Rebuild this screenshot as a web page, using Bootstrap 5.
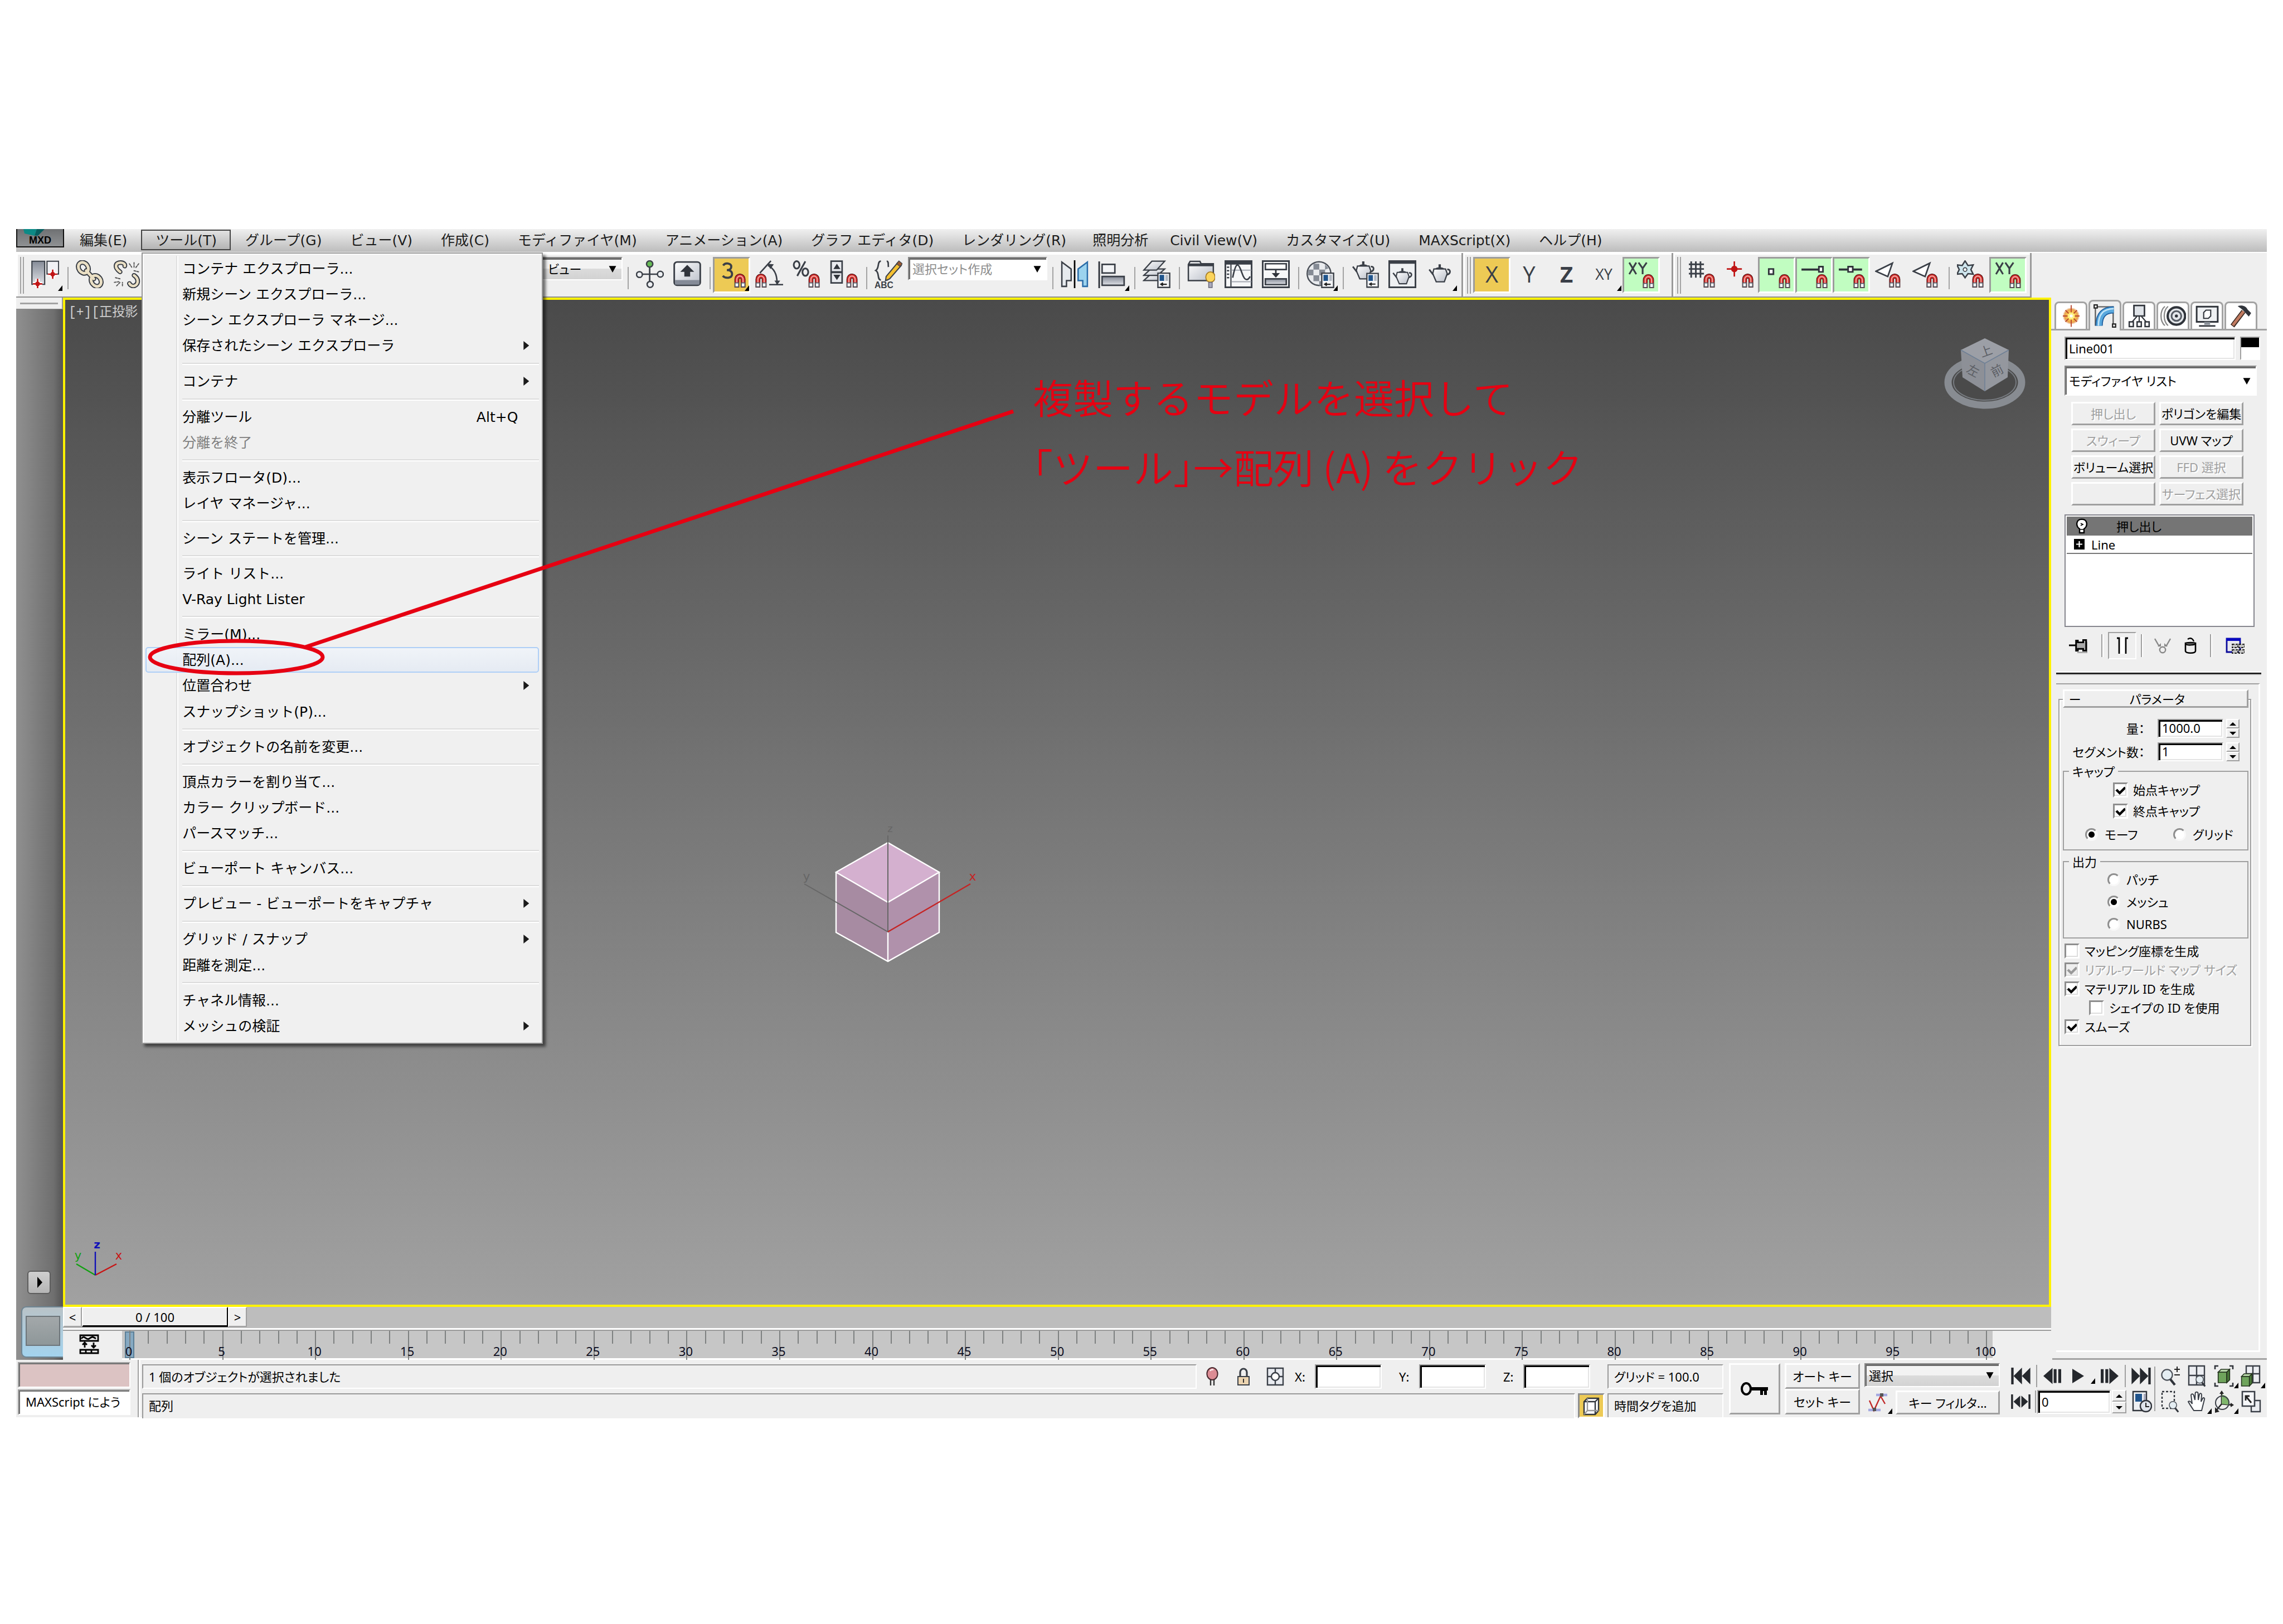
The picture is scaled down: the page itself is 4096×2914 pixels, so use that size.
<!DOCTYPE html>
<html lang="ja">
<head>
<meta charset="utf-8">
<meta name="viewport" content="width=device-width, initial-scale=1">
<title>MXD - ツール / 配列</title>
<link href="https://cdn.jsdelivr.net/npm/bootstrap@5.3.0/dist/css/bootstrap.min.css" rel="stylesheet">
<style>
:root{--face:#efefef;--gold:#edca55;--mint:#c1fdc1;--ink:#3a3f47}
body{background:#fff;color:#000;font-family:"Noto Sans","Noto Sans CJK JP",sans-serif;font-size:22px;line-height:26px;font-feature-settings:"palt"}
button,input,select{font:inherit;color:inherit;border-radius:0}
svg{display:block;flex:none}
.shell{padding:411px 29px 371px}

/* menu bar */
.menubar{height:43px;background:linear-gradient(#f0f0f0,#bcbcbc);border-bottom:2px solid #fff;font:25px/30px "DejaVu Sans","Noto Sans CJK JP",sans-serif;font-feature-settings:normal}
.logo{width:86px;height:33px;padding:0;margin-right:2px;border:2px solid #111;border-top:0;background:linear-gradient(#6f7173,#8f9193);position:relative;font:700 18px/18px "Liberation Sans",sans-serif}
.logo svg{position:absolute;left:11px;top:0}
.logo span{position:absolute;left:0;right:0;top:11px}
.menubar .nav-link{padding:4px 23px 4px 24px;margin-top:1px;height:37px;line-height:28px;color:#1b1b1b;border:2px solid transparent;white-space:nowrap}
.menubar .nav-link.tight{padding-left:20px;padding-right:11px}
.menubar .nav-link.opened{border-color:#444;background:linear-gradient(#e2e2e2,#b4b4b4)}
.toolmenu.dropdown-menu{top:42px;left:1px;width:720px;margin:0;padding:4px 5px 6px;border:2px solid #979797;border-radius:0;background:#f0f0f0;box-shadow:inset 2px 2px #fbfbfb,5px 5px 5px rgba(0,0,0,.55);font-size:25px}
.toolmenu::before{content:"";position:absolute;left:60px;top:4px;bottom:4px;width:4px;background:linear-gradient(90deg,#e0e0e0 50%,#fff 50%)}
.toolmenu .dropdown-item{position:relative;height:46px;padding:0 36px 0 64px;line-height:43px;color:#000;border:2px solid transparent;border-radius:5px;display:flex;justify-content:space-between}
.toolmenu .dropdown-item.off{color:#808080}
.toolmenu .dropdown-item.hot{border-color:#aecff7;background:linear-gradient(rgba(240,244,249,.9),rgba(228,234,243,.9))}
.toolmenu .dropdown-item.sub{height:47px}
.toolmenu .dropdown-item.sub::after{content:"";margin:13px -20px 0 0;width:10px;height:16px;background:#1a1a1a;clip-path:polygon(0 0,100% 50%,0 100%)}
.toolmenu .dropdown-divider{height:4px;margin:7px 0 6px 66px;border:0;border-top:2px solid #dcdcdc;background:#fff;opacity:1}

/* main toolbar */
.toolbars{background:var(--face)}
.tgroup{height:80px;padding:7px 6px 0 7px;border-bottom:2px solid #8f8f8f;border-right:3px solid #9a9a9a;box-shadow:inset 3px 3px #fff}
.tgroup.axes{padding-right:21px}
.grip{width:7px;height:66px;margin-right:4px;border:solid #a3a3a3;border-width:0 2px}
.tbtn{width:67px;height:65px;padding:0 0 4px;border:3px solid transparent;background:none;display:flex;align-items:center;justify-content:center;position:relative;flex:none;color:var(--ink)}
.tbtn svg{width:50px;height:50px}
.tbtn.gold{background:var(--gold)}
.tbtn.mint{background:var(--mint)}
.tbtn.gold,.tbtn.mint{border-color:#9c9c9c #fff #fff #9c9c9c}
.fly::after{content:"";position:absolute;right:-1px;bottom:1px;width:8px;height:10px;background:#000;clip-path:polygon(100% 0,100% 100%,0 100%)}
.tsep{width:2px;height:40px;margin:18px 4px 0 7px;background:#a3a3a3;flex:none}
.axis{font:500 40px/44px "Open Sans",sans-serif}
.axis.small{font-size:27px}
.under-menu{width:698px;flex:none}
.combo{appearance:none;border:2px solid;border-color:#8b8b8b #fff #fff #8b8b8b;box-shadow:inset 2px 3px #6a6a6a;outline:0;padding:0 0 0 6px;background:#fff url("data:image/svg+xml,%3Csvg xmlns='http://www.w3.org/2000/svg' viewBox='0 0 10 10'%3E%3Cpath d='M0 1h10L5 10z'/%3E%3C/svg%3E") no-repeat right 7px center/18px 13px}
.combo.glossy{background:url("data:image/svg+xml,%3Csvg xmlns='http://www.w3.org/2000/svg' viewBox='0 0 10 10'%3E%3Cpath d='M0 1h10L5 10z'/%3E%3C/svg%3E") no-repeat right 7px center/18px 13px,linear-gradient(#f3f3f3 50%,#dcdcdc 50%,#d2d2d2)}
.tbtn+.combo,.under-menu+.combo{height:42px;margin:0 2px}
.combo.coordsys{width:156px;padding-left:20px}
.nameset{width:250px;color:#8d8d8d}

/* left strip */
.sidestrip{width:84px;background:linear-gradient(90deg,#909090,#6f6f6f 80%,#555)}
.striptop{height:21px;background:var(--face);border-bottom:1px solid #888;border-right:2px solid #999;padding:9px 7px 0 7px}
.striptop div{height:3px;background:#a3a3a3}
.playtab{width:42px;height:42px;margin-left:20px;padding:0;border:2px solid #5d5d5d;border-radius:6px;background:linear-gradient(#cfcfcf,#b5b5b5)}
.bluetab{width:75px;height:92px;margin:22px 0 4px 9px;padding:15px 5px 19px 6px;border:2px solid #6e8694;border-right:0;border-radius:9px 0 0 9px;background:linear-gradient(#b9c3c8,#a3d3ee)}
.bluetab div{height:100%;border:2px solid #6d757a;background:linear-gradient(#a3a8aa,#8e9799)}

/* viewport */
.viewport3d{border:4px solid #fff200;background:linear-gradient(#4a4a4a,#767676 50%,#a1a1a1);overflow:hidden}
.vlabel{position:absolute;left:6px;top:9px;font:23px/28px "Liberation Mono","Noto Sans CJK JP",monospace;color:#cfcfcf}
.scene{position:absolute;left:0;top:0;width:100%;height:100%}
.callout{position:absolute;left:1736px;top:110px;color:#e60012;font:350 72px/125px "Noto Sans CJK JP",sans-serif;font-feature-settings:"halt";white-space:nowrap}

/* time slider and track bar */
.timeslider{height:41px;background:#bdbdbd;border-bottom:3px solid #fff}
.timeslider button{height:36px;padding:0;background:var(--face);border:2px solid;border-color:#fff #a0a0a0 #a0a0a0 #fff;line-height:30px}
.timeslider .step{width:34px}
.timeslider .thumb{width:262px;border-color:#fff #000 #000 #fff;border-bottom-width:3px}
.trackrow{height:54px;border-top:2px solid #9a9a9a;background:var(--face)}
.curvebtn{width:106px;padding:0 12px 4px 0;border:0;background:var(--face)}
.track{background:#c6c6c6;border-bottom:3px solid #fff;padding:0 10px 0 13px;margin-right:105px;position:relative}
.tick{flex:1 1 0;display:flex;height:23px;border-left:2px solid #7d8080;position:relative}
.tick.major{height:52px}
.tick.last{flex:0 0 2px}
.tick span{width:0;display:flex;justify-content:center;margin-left:-3px;padding-top:23px;color:#0d0d20;line-height:26px}
.nowmark{position:absolute;left:5px;top:1px;bottom:0;width:17px;background:rgba(70,140,190,.5);border:2px solid #5c7f97}

/* command panel */
.cmdpanel{width:387px;background:var(--face)}
.ptabs{height:59px;padding-left:6px;gap:2px;border-bottom:3px solid #a3a3a3}
.ptab{width:59px;height:49px;padding:0;background:#fff;border:3px solid #a3a3a3;border-bottom:0;border-radius:8px 8px 0 0;display:flex;align-items:center;justify-content:center}
.ptab.on{height:55px;margin-bottom:-3px;background:var(--face)}
.pbody{padding:11px 10px 0 24px}
.sunk{border:2px solid;border-color:#a0a0a0 #fff #fff #a0a0a0;box-shadow:inset 3px 3px #000,inset -2px -2px #e4e4e4;background:#fff;outline:0;padding:0 0 0 6px;min-width:0}
.soft{border:2px solid;border-color:#999 #fff #fff #999;background:var(--face)}
.raised{background:var(--face);border:3px solid;border-color:#fff #a0a0a0 #a0a0a0 #fff;padding:0;white-space:nowrap}
.raised:disabled{color:#a0a0a0;text-shadow:2px 2px #fff}
.objname{width:307px;height:42px}
.swatch{width:36px;height:42px;padding:0;border:2px solid;border-color:#a0a0a0 #fff #fff #a0a0a0;background:linear-gradient(#000 17px,#fff 17px)}
.modcombo{width:345px;height:54px;margin-top:10px}
.modgrid{display:grid;grid-template-columns:151px 151px;grid-auto-rows:42px;gap:6px 7px;margin:11px 0 0 12px}
.modgrid .raised{line-height:34px}
.modstack{width:341px;height:202px;margin-top:16px;border:2px solid #85858d;background:#fff;padding:2px}
.modstack .sel{height:34px;background:#757575;padding-left:17px}
.modstack .base{height:33px;border-bottom:2px solid #777;padding-left:13px;gap:12px}
.stackbar{height:49px;margin-top:9px}
.stackbar button{border:0;background:none;padding:0;height:49px}
.stackbar .down{width:51px;border:2px solid;border-color:#a0a0a0 #fff #fff #a0a0a0;display:flex;justify-content:center;align-items:center}
.ssep{width:4px;height:41px;background:linear-gradient(90deg,#a0a0a0 50%,#fff 50%)}
.heavy{height:6px;margin:22px 0 0 -15px;border-top:2px solid #fff;border-bottom:2px solid #999;background:#000}
.rollouts{margin:15px 2px 11px -15px;border-top:2px solid #a0a0a0;border-right:3px solid #fff;border-bottom:3px solid #fff}
.rframe{margin:26px 13px 0 4px;border:2px solid #a0a0a0;padding-bottom:16px;box-shadow:2px 2px #fff,inset 2px 2px #fff}
.rhead{display:flex;height:33px;margin:-19px 4px 0 6px;width:333px;align-items:center;line-height:24px}
.prow{height:34px;padding-right:19px;gap:5px;display:flex;justify-content:flex-end;align-items:center}
.prow label{margin-right:18px}
.prow .sunk{width:118px;height:34px;padding-bottom:2px}
.spin{width:24px;display:flex;flex-direction:column;flex:none}
.spin button{flex:1;padding:0;border:2px solid;border-color:#fff #a0a0a0 #a0a0a0 #fff;background:var(--face);display:flex;align-items:center;justify-content:center;min-height:0}
.pset{margin:6px 3px 0 6px;border:2px solid #a0a0a0;padding:0 0 4px}
.pset legend{float:none;width:auto;margin:0 0 0 9px;padding:0 6px;font-size:22px;line-height:24px}
.opt{display:flex;align-items:center;height:34px;gap:9px}
.opt.off{color:#a0a0a0;text-shadow:2px 2px #fff}
.opt input{appearance:none;margin:0;flex:none}
.tickbox{width:27px;height:27px;border:3px solid;border-color:#8e8e8e #fff #fff #8e8e8e;background:#fff;box-shadow:inset -2px -2px #ddd}
.tickbox:checked{background:#fff url("data:image/svg+xml,%3Csvg xmlns='http://www.w3.org/2000/svg' viewBox='0 0 10 10'%3E%3Cpath d='M1 4.5L4 7.5L9 2.5' fill='none' stroke='%23000' stroke-width='2.2'/%3E%3C/svg%3E") center/20px}
.tickbox:disabled{background:#eee url("data:image/svg+xml,%3Csvg xmlns='http://www.w3.org/2000/svg' viewBox='0 0 10 10'%3E%3Cpath d='M1 4.5L4 7.5L9 2.5' fill='none' stroke='%23999' stroke-width='2.2'/%3E%3C/svg%3E") center/20px}
.dotbox{width:23px;height:23px;border-radius:50%;border:3px solid;border-color:#8e8e8e #f8f8f8 #f8f8f8 #8e8e8e;background:#fff}
.dotbox:checked{background:radial-gradient(#000 5px,#fff 6px)}
.panelend{height:3px;background:#a3a3a3;margin-left:2px}
.amount{margin-top:20px}
.caps{padding-top:2px}
.caps .c1{height:38px;padding-left:88px}
.caps .r1,.caps .r1b{height:46px;gap:12px}
.caps .r1{padding-left:38px;width:196px}
.outs{margin-top:8px}
.outs .r2{height:40px;gap:11px;padding-left:78px}
.flags{margin:5px 0 0 9px}
.flags .nested{padding-left:44px}

/* status area */
.statusbar{background:var(--face);height:103px}
.listener{width:207px;padding:4px 2px 4px 3px;gap:3px}
.listener .sunk{height:46px;box-shadow:inset 2px 2px #6e6e6e;padding:0 0 4px 12px}
.listener .macro{background:#dcc3c3}
.vline{width:5px;margin:0 3px 0 11px;background:linear-gradient(90deg,#a0a0a0 40%,#fff 40%)}
.statrow{height:44px}
.statbox{flex:1 1 0;padding:7px 0 0 10px;overflow:hidden;white-space:nowrap}
.coords{margin-right:26px}
.coords label{margin-left:19px;width:36px}
.coords label+input+label{margin-left:31px}
.coord{width:120px;height:44px;padding-left:8px}
.lockb{margin-left:32px}
.gizb{margin-left:29px}
.gridcol{width:208px;margin:8px 10px 0 5px}
.gtext{padding:7px 0 0 10px;white-space:nowrap}
.cubebtn{width:48px;height:45px;padding:0;background:var(--gold);border:3px solid;border-color:#8e8e8e #fff #fff #8e8e8e;margin-left:5px;display:flex;align-items:center;justify-content:center}
.keycol{padding-top:6px}
.keybig{width:92px;height:92px}
.autokey{width:135px}
.autokey .raised{height:46px}
.keyset{width:243px}
.keyset .combo{height:43px;margin-bottom:6px}
.tang{width:49px;height:43px;margin-right:7px}
.kfilter{flex:1;height:43px}
.plain{border:0;background:none;padding:0;position:relative;display:flex;align-items:center;justify-content:center;flex:none}
.playgrid{width:277px;padding:6px 0 0 20px}
.playline{height:46px}
.w35{width:35px}
.w60{width:58px;margin-right:9px}
.sp1{margin:0 10px}
.frame{width:132px;height:43px;margin-left:2px}
.fspin{width:26px;height:42px;margin-left:2px}
.tcfg{margin-left:10px}
.navgrid{display:grid;grid-template-columns:repeat(4,48px);grid-auto-rows:46px;padding:6px 4px 0 4px}
.bsep{width:2px;height:40px;background:#a0a0a0;flex:none}
.bsep.navsep{margin-top:12px;height:80px}
.overlay{position:absolute;left:0;top:0;width:100%;height:100%;pointer-events:none;z-index:1100}
</style>
<script src="https://cdn.jsdelivr.net/npm/bootstrap@5.3.0/dist/js/bootstrap.bundle.min.js"></script>
</head>
<body class="position-relative">

<!-- icon library -->
<svg width="0" height="0" class="position-absolute" aria-hidden="true">
<defs>
<linearGradient id="steel" x1="0" y1="0" x2="0" y2="1"><stop offset="0" stop-color="#858b97"/><stop offset="1" stop-color="#dfe1e6"/></linearGradient>
<linearGradient id="pale" x1="0" y1="0" x2="1" y2="1"><stop offset="0" stop-color="#fff"/><stop offset="1" stop-color="#b9bec8"/></linearGradient>
<radialGradient id="sun"><stop offset="0" stop-color="#fff"/><stop offset=".35" stop-color="#ffd850"/><stop offset=".8" stop-color="#e9a050"/><stop offset="1" stop-color="#e9b080" stop-opacity=".3"/></radialGradient>
<symbol id="magnet" viewBox="0 0 10 12"><path d="M2.3 12V5a2.7 2.9 0 0 1 5.4 0v7" fill="none" stroke="#5a1a1a" stroke-width="4.2"/><path d="M2.3 8V5a2.7 2.9 0 0 1 5.4 0v3" fill="none" stroke="#d42a2a" stroke-width="3"/><path d="M2.3 8V5a2.7 2.9 0 0 1 5.4 0v3" fill="none" stroke="#f2a9a0" stroke-width="1"/><path d="M.8 8h3v3.4h-3zM6.2 8h3v3.4h-3z" fill="#fff" stroke="#555b66" stroke-width=".8"/></symbol>
<symbol id="pot" viewBox="0 0 20 18"><path d="M5 5h10l1.500 4-2.500 7H7L4 9z" fill="url(#pale)" stroke="#3a3f47" stroke-width="1.100"/><path d="M4.500 10L1 5.500M16 10c4-1 3.500-5 .5-4.500" fill="none" stroke="#3a3f47" stroke-width="1.400"/><path d="M6 5c1-2 7-2 8 0zM9 1h2v2.500H9z" fill="#3a3f47"/></symbol>
<symbol id="cfg" viewBox="0 0 11 13"><path d="M.6.6h9.800v11.800H.6z" fill="#f4f5f7" stroke="#3a3f47" stroke-width="1.100"/><path d="M2 2h3.800v5H2z" fill="#20548c"/><path d="M6.800 2H9v5H6.800z" fill="#b4bac4"/><path d="M3 9.800h5M4.800 8.600L3 9.800 4.800 11" stroke="#222" fill="none"/></symbol>
<symbol id="cursor" viewBox="0 0 24 24"><path d="M.6.8h11v20H.6z" fill="url(#steel)" stroke="#3a3f47"/><path d="M13.600.8h10v11h-10z" fill="#f0f1f5" stroke="#3a3f47"/><path d="M5.500 16v8M1.500 20.300h8M18.500 8v8M14.500 12h8" stroke="#fff" stroke-width="3.500"/><path d="M5.500 16v8.500M1.500 20.300h8M18.500 8v8M14.500 12h8" stroke="#c01515" stroke-width="1.300"/><circle cx="5.500" cy="20.300" r="2" fill="#c01515"/><circle cx="18.500" cy="12" r="2" fill="#c01515"/></symbol>
<symbol id="chain" viewBox="0 0 24 24"><g fill="none" stroke-linecap="round"><g stroke="#333840" stroke-width="4.200"><ellipse cx="6.500" cy="6.500" rx="4" ry="5" transform="rotate(-35 6.500 6.500)"/><ellipse cx="17.500" cy="17.800" rx="4" ry="5" transform="rotate(-35 17.500 17.800)"/><path d="M9 9l6.500 7"/></g><g stroke="#eadfc4" stroke-width="2.400"><ellipse cx="6.500" cy="6.500" rx="4" ry="5" transform="rotate(-35 6.500 6.500)"/><ellipse cx="17.500" cy="17.800" rx="4" ry="5" transform="rotate(-35 17.500 17.800)"/><path d="M9 9l6.500 7"/></g></g></symbol>
<symbol id="unchain" viewBox="0 0 24 24"><g fill="none" stroke-linecap="round"><path d="M6 10C.500 6 2 2 6.500 2c2.500 0 4 1.500 3.500 3M14 20c2 4 8 2 7-3-.3-2-1.500-3-3-4" stroke="#333840" stroke-width="4"/><path d="M6 10C.500 6 2 2 6.500 2c2.500 0 4 1.500 3.500 3M14 20c2 4 8 2 7-3-.3-2-1.500-3-3-4" stroke="#eadfc4" stroke-width="2.200"/><path d="M14 3l2 3M18 2v4M22 3l-3 4M18 9l4 1M2 15l4 1M3 22l3-3M8 22v-3M1 19l4-.5" stroke="#555" stroke-width=".9" stroke-dasharray="1.500 1"/></g></symbol>
<symbol id="pivot" viewBox="0 0 24 24"><path d="M11.800 4v16M3 12h18" stroke="#3a3f47" stroke-width="1.300"/><g stroke="#3a3f47" stroke-width="1.200" fill="#eef0f3"><circle cx="11.800" cy="3.200" r="2.700" fill="#66bb55"/><circle cx="3" cy="12.300" r="2.500"/><circle cx="21" cy="12" r="2.500"/><circle cx="12.200" cy="20.800" r="2.600"/></g></symbol>
<symbol id="upkey" viewBox="0 0 24 24"><rect x=".8" y="1.500" width="22.400" height="20" rx="2.500" fill="url(#pale)" stroke="#3a3f47" stroke-width="1.400"/><path d="M1.500 17h21v4h-21z" fill="#858b97"/><path d="M12 4l6 6h-3.500v4h-5v-4H6z" fill="#30343b"/></symbol>
<symbol id="snap3" viewBox="0 0 24 24"><path d="M4.500 4.500c2-2.800 7-2 7 1 0 2-1.800 3-3.800 3 2.500 0 4.500 1 4.500 3.400 0 3.800-5.800 4-8 1.500" fill="none" stroke="#3a3f47" stroke-width="1.800"/><use href="#magnet" x="14" y="11.500" width="10" height="12"/></symbol>
<symbol id="angle" viewBox="0 0 24 24"><path d="M4 11L13.500.500M11 4.500c6 3 8 9 7.700 16M12 21h12" fill="none" stroke="#3a3f47" stroke-width="1.300"/><path d="M10.500 3l5.500.5-3 4zM16.500 17.500h5L19 21z" fill="#3a3f47"/><use href="#magnet" x="0" y="11.500" width="10" height="12"/></symbol>
<symbol id="percent" viewBox="0 0 24 24"><g fill="none" stroke="#3a3f47" stroke-width="1.500"><ellipse cx="3.500" cy="4" rx="2.500" ry="3.200"/><ellipse cx="11" cy="10.200" rx="2.500" ry="3.200"/><path d="M11 1L4 13.500"/></g><use href="#magnet" x="13.500" y="11.500" width="10" height="12"/></symbol>
<symbol id="spinsnap" viewBox="0 0 24 24"><path d="M1 .8h9.500v9.200H1zM1 10.500h9.500v9H1z" fill="#e9ebef" stroke="#3a3f47" stroke-width="1.300"/><path d="M3 7.500h6L6 3zM3 12.500h6L6 17z" fill="#30343b"/><use href="#magnet" x="14" y="11.500" width="10" height="12"/></symbol>
<symbol id="named" viewBox="0 0 24 24"><path d="M5.500.800C2 .800 4.500 7 1 8.800 4.500 10.500 2 17 5.500 17M10.500.800c2 0 1 3 1.500 5M10.500 17c2 0 1.500-3 1.500-4" fill="none" stroke="#3a3f47" stroke-width="1.300"/><path d="M10 14L20 2l3 2.500L13 16l-3.500 1.500z" fill="#f5c030" stroke="#3a3f47"/><path d="M19 3l2-2.500 3 2.500-2 2.500z" fill="#9a5a30" stroke="#3a3f47" stroke-width=".6"/><text x="0" y="24" font-size="7.500" font-weight="700" fill="#3a3f47" font-family="Liberation Sans">ABC</text></symbol>
<symbol id="mirror" viewBox="0 0 24 24"><path d="M1 1.500l8 6v10H5v5H1z" fill="#e6eaee" stroke="#3a3f47" stroke-width="1.200"/><path d="M23 1.500l-8 6v10h4v5h4z" fill="#9cd3ee" stroke="#2a6ca8" stroke-width="1.200"/><path d="M12 0v24" stroke="#000" stroke-width="1.300"/></symbol>
<symbol id="alignbox" viewBox="0 0 24 24"><path d="M1 1v23" stroke="#30343b" stroke-width="1.400"/><path d="M3.500 3.500h11V11h-11z" fill="#f3f4f6" stroke="#3a3f47" stroke-width="1.300"/><path d="M3.500 14h19v7.500h-19z" fill="url(#steel)" stroke="#3a3f47" stroke-width="1.300"/></symbol>
<symbol id="layers" viewBox="0 0 24 24"><g fill="url(#pale)" stroke="#3a3f47" stroke-width="1.100"><path d="M1 17.500L7 12h12l-6 5.500z"/><path d="M1 13L7 7.500h12L13 13z"/><path d="M1 8.500L8 .800h11L12 8.500z"/></g><use href="#cfg" x="12.500" y="10.500" width="11.500" height="13.500"/></symbol>
<symbol id="explorer" viewBox="0 0 24 24"><path d="M1 3.500L2.500 1H11l1 2h10.500v14.500H1z" fill="url(#pale)" stroke="#3a3f47" stroke-width="1.200"/><path d="M1 4h21.500" stroke="#3a3f47" stroke-width="2.400"/><ellipse cx="20" cy="14.500" rx="4" ry="4.500" fill="#fbd45c" stroke="#a57a20" stroke-width=".8"/><path d="M18.500 19h3v4.500h-3z" fill="#aab" stroke="#667" stroke-width=".7"/></symbol>
<symbol id="curves" viewBox="0 0 24 24"><path d="M.7.7h22.600v22.600H.7z" fill="#f6f7f8" stroke="#3a3f47" stroke-width="1.400"/><path d="M.7.7h22.600v2.500H.7zM5.500 3v20" fill="#3a3f47" stroke="#3a3f47"/><path d="M2 6h2M2 9h2M2 12h2M2 15h2" stroke="#3a3f47" stroke-width="1.200"/><path d="M6 8.500h17M6 18.500h17" stroke="#a5aab2"/><path d="M7 15C10 0 12 2 15 11s6 5 7 3" fill="none" stroke="#3a3f47" stroke-width="1.300"/></symbol>
<symbol id="schema" viewBox="0 0 24 24"><path d="M.7.7h22.600v22.600H.7z" fill="#f6f7f8" stroke="#3a3f47" stroke-width="1.400"/><path d="M3 3h18v5H3z" fill="#fff" stroke="#3a3f47" stroke-width="1.300"/><path d="M3 16h18v5H3z" fill="url(#steel)" stroke="#3a3f47" stroke-width="1.300"/><path d="M12 8v4" stroke="#30343b" stroke-width="1.300"/><path d="M8.500 11h7L12 15z" fill="#30343b"/></symbol>
<symbol id="matball" viewBox="0 0 24 24"><circle cx="10.800" cy="11.500" r="10.200" fill="#e9ebee" stroke="#4a4f57" stroke-width="1.200"/><path d="M6 3h5v5H6zM11 8h5v5h-5zM1.500 8H6v5H1.500zM6 13h5v5H6zM16 3.500l3 3.500-3 1zM11 18h5v2l-5 2z" fill="#858b95"/><use href="#cfg" x="12.500" y="10.500" width="11.500" height="13.500"/></symbol>
<symbol id="potcfg" viewBox="0 0 24 24"><use href="#pot" x="-1" y="0" width="23" height="18"/><use href="#cfg" x="13" y="10.500" width="11" height="13.500"/></symbol>
<symbol id="potwin" viewBox="0 0 24 24"><path d="M.7.7h22.600v22.600H.7z" fill="#eef0f2" stroke="#3a3f47" stroke-width="1.400"/><path d="M.7.7h22.600V3H.7z" fill="#3a3f47"/><use href="#pot" x="2" y="6" width="20" height="16"/></symbol>
<symbol id="potonly" viewBox="0 0 24 24"><use href="#pot" x="0" y="2.500" width="24" height="18"/></symbol>
<symbol id="gridsnap" viewBox="0 0 24 24"><path d="M2.500 1v14M6.500 1v14M10.500 1v14M.5 3.500h13M.5 7.500h13M.5 11.500h13" stroke="#3a3f47" stroke-width="1.400"/><use href="#magnet" x="13" y="11.500" width="10" height="12"/></symbol>
<symbol id="pivsnap" viewBox="0 0 24 24"><path d="M7.500 1v13M1 7.500h13" stroke="#c01515" stroke-width="1.300"/><circle cx="7.500" cy="7.500" r="2.800" fill="#c01515"/><use href="#magnet" x="14" y="11.500" width="10" height="12"/></symbol>
<symbol id="vtxsnap" viewBox="0 0 24 24"><path d="M5 7.500h4V12H5z" fill="#fff" stroke="#30343b" stroke-width="1.400"/><use href="#magnet" x="13.500" y="12" width="10" height="12"/></symbol>
<symbol id="endsnap" viewBox="0 0 24 24"><path d="M1 8h15" stroke="#30343b" stroke-width="1.800"/><path d="M16 5.500h3.500V10H16z" fill="#fff" stroke="#30343b" stroke-width="1.400"/><use href="#magnet" x="13.500" y="12" width="10" height="12"/></symbol>
<symbol id="midsnap" viewBox="0 0 24 24"><path d="M1 8h20" stroke="#30343b" stroke-width="1.800"/><path d="M9 5.500h4V10H9z" fill="#fff" stroke="#30343b" stroke-width="1.400"/><use href="#magnet" x="13.500" y="12" width="10" height="12"/></symbol>
<symbol id="facesnap" viewBox="0 0 24 24"><path d="M.8 9.500L15 2.500l-4 11.500z" fill="#fff" stroke="#3a3f47" stroke-width="1.300"/><use href="#magnet" x="12" y="11.500" width="10" height="12"/></symbol>
<symbol id="starsnap" viewBox="0 0 24 24"><path d="M7 .5l2.500 4L14 4l-2 4 2 4-4.500-.5L7 15l-2.500-3.500L0 12l2-4-2-4 4.500.5z" fill="#cfe6ee" stroke="#3a3f47" stroke-width="1.200"/><circle cx="7" cy="8" r="1.600" fill="#fff" stroke="#3a3f47" stroke-width=".8"/><use href="#magnet" x="13" y="11.500" width="10" height="12"/></symbol>
<symbol id="xysnap" viewBox="0 0 24 24"><path d="M1.500 2l6 10M7.500 2l-6 10M9.500 2l3.500 5v5M16.500 2L13 7" fill="none" stroke="#3a3f47" stroke-width="1.500"/><use href="#magnet" x="13" y="12" width="10" height="12"/></symbol>
<symbol id="create" viewBox="0 0 20 20"><circle cx="10" cy="10" r="6.500" fill="url(#sun)"/><path d="M10 1.500v17M3.500 10h13M5.500 5.500l9 9M14.500 5.500l-9 9" stroke="#b8452c" stroke-width=".8"/><circle cx="10" cy="10" r="2.800" fill="#ffef80"/><circle cx="10" cy="10" r="1.200" fill="#fff"/></symbol>
<symbol id="modify" viewBox="0 0 20 20"><path d="M2.500 2.500h14v15" fill="none" stroke="#555"/><path d="M2 18V3" stroke="#555"/><path d="M5 18C5 9 9 5 17 5" fill="none" stroke="#1f5f9f" stroke-width="6"/><path d="M5 18C5 9 9 5 17 5" fill="none" stroke="#5aa9de" stroke-width="4.400"/><path d="M4.500 18C4.500 8.500 8 4.500 17 4" fill="none" stroke="#c6e6f8" stroke-width="1.200"/><path d="M1 1h2.500v2.500H1zM16 16.500h2.500V19H16z" fill="#fff" stroke="#222"/></symbol>
<symbol id="hierarchy" viewBox="0 0 20 20"><path d="M5.500 1h9v9h-9z" fill="#dfe3e8" stroke="#30343b" stroke-width="1.300"/><path d="M10 10v5M8 10.500L4 15M12 10.500l4 4.500" stroke="#30343b"/><path d="M1.500 15H5v4H1.500zM8.200 15h3.600v4H8.200zM15 15h3.500v4H15z" fill="#fff" stroke="#30343b" stroke-width="1.200"/></symbol>
<symbol id="motion" viewBox="0 0 20 20"><g fill="none"><path d="M3.500 2.500C-.5 6-.5 14 3.500 17.500M6 2.500c-4 3.500-4 11.500 0 15" stroke="#888"/><circle cx="12.500" cy="10" r="6.800" fill="#e3e6ea" stroke="#30343b" stroke-width="1.800"/><circle cx="12.500" cy="10" r="3.800" stroke="#555b64" stroke-width="1.300"/><circle cx="12.500" cy="10" r="1.200" fill="#30343b"/></g></symbol>
<symbol id="display" viewBox="0 0 20 20"><path d="M1 2h18v13H1z" fill="#eef0f2" stroke="#30343b" stroke-width="1.400"/><path d="M7 7l2-2h4v5l-2 2H7z" fill="#fff" stroke="#30343b"/><path d="M7.500 15h5v2.500h-5z" fill="#8a9098"/><path d="M3 18.500h14" stroke="#30343b" stroke-width="1.300"/></symbol>
<symbol id="hammer" viewBox="0 0 20 20"><path d="M2.500 18.500L12 6" stroke="#3a2a22" stroke-width="4"/><path d="M2.800 18L12 6" stroke="#c07a60" stroke-width="2.400"/><path d="M7 1.500c4-1 7 0 8.500 3l3 3-2 3-5-5.500c-1-1-2.500-2-4.500-3.500z" fill="#30343b"/></symbol>
<symbol id="pushpin" viewBox="0 0 16 12"><path d="M0 5.500h6" stroke="#000" stroke-width="1.400"/><path d="M7 11.500h8v-9" fill="none" stroke="#999"/><path d="M6 1.500h1.500V3H12V1h2.500v9H12V8.500H7.500V10H6z" fill="#aaa" stroke="#000" stroke-width="1.400"/></symbol>
<symbol id="bulbw" viewBox="0 0 10 14"><path d="M3 9.500C-.5 7-.5 1 5 .8c5.500.2 5.500 6.200 2 8.700V13H3z" fill="#fff" stroke="#000" stroke-width="1.200"/><path d="M3 10h4M4 4.500l2 1-2 1" stroke="#000" fill="none" stroke-width=".8"/></symbol>
<symbol id="first" viewBox="0 0 16 14"><path d="M0 0h2v14H0zM9 0v14L2 7zM16 0v14L9 7z" fill="#25282d"/></symbol>
<symbol id="prev" viewBox="0 0 16 14"><path d="M8 0v14L0 7zM9 1h2.500v12H9zM13 1h2.500v12H13z" fill="#25282d"/></symbol>
<symbol id="zoomg" viewBox="0 0 16 16"><circle cx="5.500" cy="6" r="4.800" fill="#e4edf2" stroke="#4a4f57" stroke-width="1.100"/><path d="M8.500 10l4 5" stroke="#30343b" stroke-width="2.200"/></symbol>
<symbol id="gcube" viewBox="0 0 14 16"><path d="M1 4h9v11H1z" fill="#6fa45c" stroke="#25351f"/><path d="M1 4l3-3h9l-3 3z" fill="#b9d8ab" stroke="#25351f"/><path d="M10 4l3-3v11l-3 3z" fill="#4a7a3a" stroke="#25351f"/></symbol>
</defs>
</svg>

<div class="shell d-flex flex-column min-vh-100">

<!-- menu bar -->
<nav class="menubar d-flex" aria-label="メイン メニュー">
  <button class="logo" aria-label="MXD"><svg width="38" height="13" viewBox="0 0 38 13"><path d="M0 0h24l-4 12L2 8z" fill="#0c8a86"/><path d="M24 0h14L26 12h-6z" fill="#075f60"/></svg><span>MXD</span></button>
  <ul class="nav flex-nowrap">
    <li class="nav-item"><a class="nav-link" href="#">編集(E)</a></li>
    <li class="nav-item dropdown"><a class="nav-link opened" href="#" aria-expanded="true">ツール(T)</a>
      <div class="dropdown-menu show toolmenu">
        <a class="dropdown-item" href="#">コンテナ エクスプローラ...</a>
        <a class="dropdown-item" href="#">新規シーン エクスプローラ...</a>
        <a class="dropdown-item" href="#">シーン エクスプローラ マネージ...</a>
        <a class="dropdown-item sub" href="#">保存されたシーン エクスプローラ</a>
        <hr class="dropdown-divider">
        <a class="dropdown-item sub" href="#">コンテナ</a>
        <hr class="dropdown-divider">
        <a class="dropdown-item" href="#"><span>分離ツール</span><span>Alt+Q</span></a>
        <a class="dropdown-item off" href="#">分離を終了</a>
        <hr class="dropdown-divider">
        <a class="dropdown-item" href="#">表示フロータ(D)...</a>
        <a class="dropdown-item" href="#">レイヤ マネージャ...</a>
        <hr class="dropdown-divider">
        <a class="dropdown-item" href="#">シーン ステートを管理...</a>
        <hr class="dropdown-divider">
        <a class="dropdown-item" href="#">ライト リスト...</a>
        <a class="dropdown-item" href="#">V-Ray Light Lister</a>
        <hr class="dropdown-divider">
        <a class="dropdown-item" href="#">ミラー(M)...</a>
        <a class="dropdown-item hot" href="#">配列(A)...</a>
        <a class="dropdown-item sub" href="#">位置合わせ</a>
        <a class="dropdown-item" href="#">スナップショット(P)...</a>
        <hr class="dropdown-divider">
        <a class="dropdown-item" href="#">オブジェクトの名前を変更...</a>
        <hr class="dropdown-divider">
        <a class="dropdown-item" href="#">頂点カラーを割り当て...</a>
        <a class="dropdown-item" href="#">カラー クリップボード...</a>
        <a class="dropdown-item" href="#">パースマッチ...</a>
        <hr class="dropdown-divider">
        <a class="dropdown-item" href="#">ビューポート キャンバス...</a>
        <hr class="dropdown-divider">
        <a class="dropdown-item sub" href="#">プレビュー - ビューポートをキャプチャ</a>
        <hr class="dropdown-divider">
        <a class="dropdown-item sub" href="#">グリッド / スナップ</a>
        <a class="dropdown-item" href="#">距離を測定...</a>
        <hr class="dropdown-divider">
        <a class="dropdown-item" href="#">チャネル情報...</a>
        <a class="dropdown-item sub" href="#">メッシュの検証</a>
      </div>
    </li>
    <li class="nav-item"><a class="nav-link" href="#">グループ(G)</a></li>
    <li class="nav-item"><a class="nav-link" href="#">ビュー(V)</a></li>
    <li class="nav-item"><a class="nav-link" href="#">作成(C)</a></li>
    <li class="nav-item"><a class="nav-link" href="#">モディファイヤ(M)</a></li>
    <li class="nav-item"><a class="nav-link" href="#">アニメーション(A)</a></li>
    <li class="nav-item"><a class="nav-link" href="#">グラフ エディタ(D)</a></li>
    <li class="nav-item"><a class="nav-link" href="#">レンダリング(R)</a></li>
    <li class="nav-item"><a class="nav-link tight" href="#">照明分析</a></li>
    <li class="nav-item"><a class="nav-link" href="#">Civil View(V)</a></li>
    <li class="nav-item"><a class="nav-link" href="#">カスタマイズ(U)</a></li>
    <li class="nav-item"><a class="nav-link" href="#">MAXScript(X)</a></li>
    <li class="nav-item"><a class="nav-link" href="#">ヘルプ(H)</a></li>
  </ul>
</nav>

<!-- toolbars -->
<div class="toolbars d-flex">
  <div class="tgroup d-flex">
    <div class="grip"></div>
    <button class="tbtn fly" aria-label="選択"><svg><use href="#cursor"/></svg></button><div class="tsep"></div>
    <button class="tbtn" aria-label="リンク"><svg><use href="#chain"/></svg></button>
    <button class="tbtn" aria-label="リンク解除"><svg><use href="#unchain"/></svg></button>
    <div class="under-menu"></div>
    <select class="combo glossy coordsys" aria-label="参照座標系"><option>ビュー</option></select><div class="tsep"></div>
    <button class="tbtn" aria-label="基点"><svg><use href="#pivot"/></svg></button>
    <button class="tbtn" aria-label="キーボード"><svg><use href="#upkey"/></svg></button><div class="tsep"></div>
    <button class="tbtn gold fly" aria-label="3D スナップ"><svg><use href="#snap3"/></svg></button>
    <button class="tbtn" aria-label="角度スナップ"><svg><use href="#angle"/></svg></button>
    <button class="tbtn" aria-label="パーセント スナップ"><svg><use href="#percent"/></svg></button>
    <button class="tbtn" aria-label="スピナー スナップ"><svg><use href="#spinsnap"/></svg></button><div class="tsep"></div>
    <button class="tbtn" aria-label="選択セット編集"><svg><use href="#named"/></svg></button>
    <select class="combo nameset" aria-label="名前付き選択セット"><option>選択セット作成</option></select><div class="tsep"></div>
    <button class="tbtn" aria-label="ミラー"><svg><use href="#mirror"/></svg></button>
    <button class="tbtn fly" aria-label="位置合わせ"><svg><use href="#alignbox"/></svg></button><div class="tsep"></div>
    <button class="tbtn" aria-label="レイヤ"><svg><use href="#layers"/></svg></button><div class="tsep"></div>
    <button class="tbtn" aria-label="リボン"><svg><use href="#explorer"/></svg></button>
    <button class="tbtn" aria-label="カーブ"><svg><use href="#curves"/></svg></button>
    <button class="tbtn" aria-label="スケマティック"><svg><use href="#schema"/></svg></button><div class="tsep"></div>
    <button class="tbtn fly" aria-label="マテリアル"><svg><use href="#matball"/></svg></button><div class="tsep"></div>
    <button class="tbtn" aria-label="レンダリング設定"><svg><use href="#potcfg"/></svg></button>
    <button class="tbtn" aria-label="フレーム ウィンドウ"><svg><use href="#potwin"/></svg></button>
    <button class="tbtn fly" aria-label="レンダリング"><svg><use href="#potonly"/></svg></button>
  </div>
  <div class="tgroup axes d-flex">
    <div class="grip"></div>
    <button class="tbtn gold axis">X</button>
    <button class="tbtn axis">Y</button>
    <button class="tbtn axis fw-bold">Z</button>
    <button class="tbtn axis small fly">XY</button>
    <button class="tbtn mint" aria-label="XY スナップ"><svg><use href="#xysnap"/></svg></button>
  </div>
  <div class="tgroup d-flex">
    <div class="grip"></div>
    <button class="tbtn" aria-label="グリッド"><svg><use href="#gridsnap"/></svg></button>
    <button class="tbtn" aria-label="基点スナップ"><svg><use href="#pivsnap"/></svg></button>
    <button class="tbtn mint" aria-label="頂点"><svg><use href="#vtxsnap"/></svg></button>
    <button class="tbtn mint" aria-label="端点"><svg><use href="#endsnap"/></svg></button>
    <button class="tbtn mint" aria-label="中点"><svg><use href="#midsnap"/></svg></button>
    <button class="tbtn" aria-label="面"><svg><use href="#facesnap"/></svg></button>
    <button class="tbtn" aria-label="面の中心"><svg><use href="#facesnap"/></svg></button><div class="tsep"></div>
    <button class="tbtn" aria-label="フリーズ"><svg><use href="#starsnap"/></svg></button>
    <button class="tbtn mint" aria-label="軸拘束"><svg><use href="#xysnap"/></svg></button>
  </div>
</div>

<!-- workspace -->
<main class="d-flex flex-grow-1">
  <aside class="sidestrip d-flex flex-column">
    <div class="striptop"><div></div></div>
    <button class="playtab mt-auto" aria-label="展開"><svg width="38" height="38" viewBox="0 0 38 38"><path d="M16 9l9 10-9 10z"/></svg></button>
    <div class="bluetab"><div></div></div>
  </aside>

  <div class="d-flex flex-column flex-grow-1">
    <section class="viewport3d position-relative flex-grow-1">
      <div class="vlabel">[+][正投影</div>
      <svg class="scene"><g transform="translate(-117 -538)">
        <!-- selected cube -->
        <path d="M1593 1512l92 53-92 54-93-54z" fill="#d4b0cf"/>
        <path d="M1500 1565l93 54v106l-93-52z" fill="#a78ba2"/>
        <path d="M1593 1619l92-54v108l-92 52z" fill="#b091ab"/>
        <path d="M1500 1565l93-53 92 53-92 54zM1500 1565v108l93 52 92-52v-108M1593 1672v53" fill="none" stroke="#fff" stroke-width="2.400"/>
        <path d="M1593 1499v173L1443 1586" fill="none" stroke="#666" stroke-width="2"/>
        <path d="M1593 1672l148-86" stroke="#c52424" stroke-width="2.400"/>
        <g font-family="DejaVu Sans" font-size="22" text-anchor="middle"><text x="1597" y="1493" fill="#666" font-size="18">z</text><text x="1447" y="1580" fill="#666">y</text><text x="1745" y="1580" fill="#c52424">x</text></g>
        <!-- world axis tripod -->
        <g fill="none" stroke-width="2.400"><path d="M171 2288l-34-20" stroke="#12a012"/><path d="M171 2288l38-20" stroke="#c81414"/><path d="M171 2288v-42" stroke="#1010b8"/></g>
        <g font-family="DejaVu Sans" font-size="21" font-weight="700" text-anchor="middle"><text x="174" y="2240" fill="#1010b8" font-size="20">z</text><text x="140" y="2260" fill="#12a012" font-weight="400">y</text><text x="213" y="2260" fill="#c81414" font-weight="400">x</text></g>
        <!-- view cube -->
        <ellipse cx="3561" cy="687" rx="60" ry="36" fill="#4a4a4a"/>
        <ellipse cx="3561" cy="686" rx="66" ry="41" fill="none" stroke="#888c92" stroke-width="13"/>
        <ellipse cx="3561" cy="686" rx="56" ry="32" fill="none" stroke="#777b80" stroke-width="2"/>
        <path d="M3561 607l43 21-43 24-43-24z" fill="#9c9fa6"/><path d="M3518 628l43 24v50l-40-25z" fill="#8d9097"/><path d="M3604 628l-43 24v50l41-25z" fill="#94979e"/>
        <path d="M3518 628l43 24 43-24M3561 652v50" fill="none" stroke="#6d7f95" stroke-width="1.500"/>
        <g font-family="Noto Sans CJK JP" font-size="22" fill="#5d6066" text-anchor="middle"><text x="3563" y="638" transform="rotate(-20 3563 630)">上</text><text x="3540" y="673" transform="rotate(28 3540 665)">左</text><text x="3583" y="673" transform="rotate(-28 3583 665)">前</text></g>
      </g></svg>
      <div class="callout">複製するモデルを選択して<br>「ツール」→配列 (A) をクリック</div>
    </section>
    <div class="timeslider d-flex">
      <button class="step">&lt;</button><button class="thumb">0 / 100</button><button class="step">&gt;</button>
    </div>
    <div class="trackrow d-flex">
      <button class="curvebtn d-flex align-items-center justify-content-center" aria-label="カーブ エディタ"><svg width="36" height="36" viewBox="0 0 18 18" fill="none" stroke="#000" stroke-width="1.400"><path d="M1 1h16v5H1zM1 14h16v3H1zM6 14v3M11 14v3M2 4c3-4 4 2 7 0s3-2 6 0M5 12V8M3 9.500l2-2 2 2M13 7.500v4M11 10l2 2 2-2"/></svg></button>
      <div class="track d-flex flex-grow-1" id="track"><div class="nowmark"></div></div>
    </div>
  </div>

  <!-- command panel -->
  <aside class="cmdpanel d-flex flex-column">
    <div class="ptabs d-flex align-items-end">
      <button class="ptab" aria-label="作成"><svg width="46" height="46"><use href="#create"/></svg></button>
      <button class="ptab on" aria-label="修正"><svg width="44" height="44"><use href="#modify"/></svg></button>
      <button class="ptab" aria-label="階層"><svg width="42" height="42"><use href="#hierarchy"/></svg></button>
      <button class="ptab" aria-label="モーション"><svg width="46" height="46"><use href="#motion"/></svg></button>
      <button class="ptab" aria-label="表示"><svg width="42" height="42"><use href="#display"/></svg></button>
      <button class="ptab" aria-label="ユーティリティ"><svg width="42" height="42"><use href="#hammer"/></svg></button>
    </div>
    <div class="pbody d-flex flex-column flex-grow-1">
      <div class="d-flex gap-2"><input class="sunk objname" value="Line001" aria-label="オブジェクト名"><button class="swatch" aria-label="カラー"></button></div>
      <select class="combo modcombo" aria-label="モディファイヤ"><option>モディファイヤ リスト</option></select>
      <div class="modgrid">
        <button class="raised" disabled>押し出し</button><button class="raised">ポリゴンを編集</button>
        <button class="raised" disabled>スウィープ</button><button class="raised">UVW マップ</button>
        <button class="raised">ボリューム選択</button><button class="raised" disabled>FFD 選択</button>
        <button class="raised" disabled aria-label="空き"></button><button class="raised" disabled>サーフェス選択</button>
      </div>
      <div class="modstack">
        <div class="sel d-flex align-items-center"><svg width="20" height="28"><use href="#bulbw"/></svg><span class="ms-5 ps-1">押し出し</span></div>
        <div class="base d-flex align-items-center"><svg width="19" height="19" viewBox="0 0 19 19"><path d="M0 0h19v19H0z"/><path d="M9.500 4v11M4 9.500h11" stroke="#fff" stroke-width="2.200"/></svg><span>Line</span></div>
      </div>
      <div class="stackbar d-flex align-items-center">
        <button class="ms-2 me-4" aria-label="ピン"><svg width="34" height="26"><use href="#pushpin"/></svg></button><div class="ssep me-2"></div>
        <button class="down" aria-label="最終結果を表示"><svg width="24" height="32" viewBox="0 0 12 16"><path d="M2 0h8v15H2z" fill="#fff"/><path d="M1 1h2v14M11 1H9v14" fill="none" stroke="#000" stroke-width="1.400"/></svg></button>
        <div class="ssep ms-2 me-3"></div>
        <button class="ms-1 me-4" aria-label="固有にする"><svg width="30" height="28" viewBox="0 0 15 14" fill="none" stroke="#888" stroke-width="1.200"><path d="M.5.5l4 7M14.500.5l-4 7"/><circle cx="7.500" cy="10.500" r="2.600"/><path d="M3 7.500h3v-3zM12 7.500H9v-3z" fill="#888" stroke="none"/></svg></button>
        <button class="me-4" aria-label="削除"><svg width="22" height="30" viewBox="0 0 11 15"><path d="M1 5h9v7c0 2.500-9 2.500-9 0z" fill="#eee" stroke="#000" stroke-width="1.300"/><path d="M1 5.500C1 4 10 4 10 5.500S1 7.500 1 5.500z" fill="#555" stroke="#000"/><path d="M3 1.500c3-2 5 0 5.500 2" fill="none" stroke="#000" stroke-width="1.200"/></svg></button>
        <div class="ssep me-4"></div>
        <button aria-label="構成"><svg width="34" height="30" viewBox="0 0 17 15"><path d="M1 1h12v12H1z" fill="#e8e8ee" stroke="#0a0a9a" stroke-width="1.400"/><path d="M.5.5h13V3H.5z" fill="#0a0ac0"/><path d="M6 6h5v3H6zM12 6h5v3h-5zM6 11h5v3H6zM12 11h5v3h-5z" fill="#c4c4c4" stroke="#222" stroke-width=".9" stroke-dasharray="2 1"/></svg></button>
      </div>
      <div class="heavy"></div>
      <div class="rollouts flex-grow-1">
        <div class="rframe">
          <button class="raised rhead"><span class="ps-2">ー</span><span class="flex-grow-1 pe-4">パラメータ</span></button>
          <div class="prow amount"><label for="amt">量：</label><input id="amt" class="sunk" value="1000.0"><div class="spin h-100"><button aria-label="上"><svg width="12" height="6" viewBox="0 0 12 6"><path d="M6 0l6 6H0z"/></svg></button><button aria-label="下"><svg width="12" height="6" viewBox="0 0 12 6"><path d="M6 6l6-6H0z"/></svg></button></div></div>
          <div class="prow mt-2"><label for="seg">セグメント数：</label><input id="seg" class="sunk" value="1"><div class="spin h-100"><button aria-label="上"><svg width="12" height="6" viewBox="0 0 12 6"><path d="M6 0l6 6H0z"/></svg></button><button aria-label="下"><svg width="12" height="6" viewBox="0 0 12 6"><path d="M6 6l6-6H0z"/></svg></button></div></div>
          <fieldset class="pset caps"><legend>キャップ</legend>
            <label class="opt c1"><input type="checkbox" class="tickbox" checked>始点キャップ</label>
            <label class="opt c1"><input type="checkbox" class="tickbox" checked>終点キャップ</label>
            <div class="d-flex"><label class="opt r1"><input type="radio" name="cap" class="dotbox" checked>モーフ</label><label class="opt r1b"><input type="radio" name="cap" class="dotbox">グリッド</label></div>
          </fieldset>
          <fieldset class="pset outs"><legend>出力</legend>
            <label class="opt r2"><input type="radio" name="out" class="dotbox">パッチ</label>
            <label class="opt r2"><input type="radio" name="out" class="dotbox" checked>メッシュ</label>
            <label class="opt r2"><input type="radio" name="out" class="dotbox">NURBS</label>
          </fieldset>
          <div class="flags">
            <label class="opt"><input type="checkbox" class="tickbox">マッピング座標を生成</label>
            <label class="opt off"><input type="checkbox" class="tickbox" checked disabled>リアル-ワールド マップ サイズ</label>
            <label class="opt"><input type="checkbox" class="tickbox" checked>マテリアル ID を生成</label>
            <label class="opt nested"><input type="checkbox" class="tickbox">シェイプの ID を使用</label>
            <label class="opt"><input type="checkbox" class="tickbox" checked>スムーズ</label>
          </div>
        </div>
      </div>
    </div>
    <div class="panelend"></div>
  </aside>
</main>

<!-- status bar -->
<footer class="statusbar d-flex">
  <div class="listener d-flex flex-column"><input class="sunk macro" aria-label="マクロ レコーダ"><input class="sunk" value="MAXScript によう" aria-label="MAXScript リスナー"></div>
  <div class="vline"></div>
  <div class="flex-grow-1 d-flex flex-column pt-2">
    <div class="statrow d-flex align-items-center">
      <div class="statbox soft h-100">1 個のオブジェクトが選択されました</div>
      <div class="coords d-flex align-items-center">
        <button class="plain ms-3" aria-label="分離"><svg width="24" height="34" viewBox="0 0 12 17"><ellipse cx="6" cy="6" rx="4.800" ry="5.500" fill="#dc8c94" stroke="#4a2a30"/><path d="M4 3.500c1-1.500 2-1.500 3-1" stroke="#fff" fill="none"/><path d="M4.500 11.500v5M7.500 11.500v5" stroke="#333" stroke-width="1.200"/></svg></button>
        <button class="plain lockb" aria-label="ロック"><svg width="24" height="32" viewBox="0 0 12 16"><path d="M3 8V4a3 3 0 0 1 6 0v4" fill="none" stroke="#3a3f47" stroke-width="1.600"/><path d="M1 8h10v7.500H1z" fill="#ecd4b0" stroke="#3a3f47"/><path d="M6 10v3.500" stroke="#333"/></svg></button>
        <button class="plain gizb" aria-label="絶対モード"><svg width="32" height="34" viewBox="0 0 16 17" fill="#e8ebf0" stroke="#3a3f47" stroke-width="1.200"><path d="M1 1h14v15H1zM8 1v4M8 12v4M1 8.500h4M11 8.500h4"/><circle cx="8" cy="8.500" r="3.500" fill="#fff"/></svg></button>
        <label for="cx">X:</label><input id="cx" class="sunk coord"><label for="cy">Y:</label><input id="cy" class="sunk coord"><label for="cz">Z:</label><input id="cz" class="sunk coord">
      </div>
    </div>
    <div class="d-flex pt-2 flex-grow-1">
      <div class="statbox soft border-bottom-0">配列</div>
      <button class="cubebtn" aria-label="適応劣化"><svg width="34" height="36" viewBox="0 0 17 18" fill="#fff" stroke="#30343b" stroke-width="1.200"><path d="M2 5l3-3h10v11l-3 3.500H2z"/><path d="M2 5h10v11.500M12 5l3-3" fill="none"/><path d="M5 2v11h10M5 13l-3 3.500" fill="none" stroke="#999"/></svg></button>
    </div>
  </div>
  <div class="gridcol d-flex flex-column gap-2">
    <div class="statrow soft gtext">グリッド = 100.0</div>
    <div class="soft gtext flex-grow-1 border-bottom-0">時間タグを追加</div>
  </div>
  <div class="keycol d-flex gap-2">
    <button class="raised keybig d-flex align-items-center justify-content-center" aria-label="キーを設定"><svg width="52" height="26" viewBox="0 0 26 13"><ellipse cx="5.500" cy="6.500" rx="4" ry="5" fill="none" stroke="#000" stroke-width="2"/><path d="M9.500 5H25v3h-1v4h-2.500V8.500h-1V12H18V8H9.500z"/></svg></button>
    <div class="d-flex flex-column autokey"><button class="raised">オート キー</button><button class="raised">セット キー</button></div>
    <div class="keyset d-flex flex-column">
      <select class="combo glossy" aria-label="選択セット"><option>選択</option></select>
      <div class="d-flex"><button class="plain fly tang" aria-label="接線"><svg width="36" height="36" viewBox="0 0 18 18" fill="none"><path d="M1 7l4 9 6-13 4 7" stroke="#c02828" stroke-width="1.200"/><path d="M0 15.500h11M7 2h10" stroke="#a4a8e0" stroke-width="2.200"/><path d="M4 13.500h3v3H4zM10.500.5h3v3h-3z" fill="#555"/></svg></button><button class="raised kfilter">キー フィルタ...</button></div>
    </div>
  </div>
  <div class="playgrid d-flex flex-column">
    <div class="playline d-flex align-items-center">
      <button class="plain w35" aria-label="先頭"><svg width="35" height="30"><use href="#first"/></svg></button><div class="bsep sp1"></div>
      <button class="plain w35" aria-label="前"><svg width="33" height="30"><use href="#prev"/></svg></button>
      <button class="plain fly w60" aria-label="再生"><svg width="22" height="30" viewBox="0 0 11 15"><path d="M0 1l10.500 6.500L0 14z" fill="#25282d"/></svg></button>
      <button class="plain w35" aria-label="次"><svg width="33" height="30" viewBox="0 0 16 14"><path d="M8 0v14l8-7zM4.500 1H7v12H4.500zM.5 1H3v12H.5z" fill="#25282d"/></svg></button><div class="bsep sp1"></div>
      <button class="plain w35" aria-label="末尾"><svg width="35" height="30" viewBox="0 0 16 14"><path d="M14 0h2v14h-2zM7 0v14l7-7zM0 0v14l7-7z" fill="#25282d"/></svg></button>
    </div>
    <div class="playline d-flex align-items-center">
      <button class="plain w35" aria-label="キー モード"><svg width="35" height="26" viewBox="0 0 16 12"><path d="M0 0h1.600v12H0zM14.400 0H16v12h-1.600zM7.500 1v10L2 6zM8.500 1v10L14 6z" fill="#25282d"/></svg></button><div class="bsep ms-2"></div>
      <input class="sunk frame" value="0" aria-label="フレーム"><div class="spin fspin"><button aria-label="上"><svg width="12" height="8" viewBox="0 0 12 6"><path d="M6 0l6 6H0z"/></svg></button><button aria-label="下"><svg width="12" height="8" viewBox="0 0 12 6"><path d="M6 6l6-6H0z"/></svg></button></div>
      <button class="plain tcfg" aria-label="時間設定"><svg width="36" height="40" viewBox="0 0 18 20"><path d="M1 1h12v17H1z" fill="#eef0f3" stroke="#30343b" stroke-width="1.200"/><path d="M3 3h6v7H3z" fill="#20548c"/><path d="M10.500 3h2v7h-2z" fill="#aab"/><circle cx="12.500" cy="14" r="5" fill="#dfe5ec" stroke="#30343b" stroke-width="1.200"/><path d="M12.500 11v3.500h3" stroke="#222" fill="none"/></svg></button>
    </div>
  </div>
  <div class="bsep navsep"></div>
  <div class="navgrid">
    <button class="plain" aria-label="ズーム"><svg width="36" height="40" viewBox="0 0 18 20"><use href="#zoomg" x="0" y="2" width="16" height="18"/><path d="M12 4h5M14.500 1.500v5M12 9h5" stroke="#222"/></svg></button>
    <button class="plain" aria-label="全ズーム"><svg width="36" height="40" viewBox="0 0 18 20"><path d="M1 1h14v17H1zM8 1v17M1 9.500h14" fill="#eceef2" stroke="#3a3f47" stroke-width="1.200"/><use href="#zoomg" x="7" y="9" width="11" height="11"/></svg></button>
    <button class="plain fly" aria-label="範囲ズーム"><svg width="38" height="40" viewBox="0 0 19 20"><path d="M1 4V1h3M14 1h3v3M1 16v3h3M14 19h3v-3" fill="none" stroke="#30343b" stroke-width="1.300"/><use href="#gcube" x="3" y="3" width="12" height="14"/></svg></button>
    <button class="plain fly" aria-label="全範囲ズーム"><svg width="38" height="40" viewBox="0 0 19 20"><path d="M5 1h12v15H5zM11 1v15M5 8h12" fill="#eceef2" stroke="#3a3f47" stroke-width="1.200"/><use href="#gcube" x="0" y="7" width="11" height="13"/></svg></button>
    <button class="plain" aria-label="領域ズーム"><svg width="36" height="40" viewBox="0 0 18 20"><path d="M1 1h11v15H1z" fill="none" stroke="#30343b" stroke-width="1.200" stroke-dasharray="2 1.500"/><use href="#zoomg" x="7" y="9" width="11" height="11"/></svg></button>
    <button class="plain fly" aria-label="パン"><svg width="38" height="40" viewBox="0 0 19 20"><path d="M6 18c-2-3-4-6-5-8 1-1 2.500 0 3.500 2L3.500 4C4 2.500 5.500 3 6 4.500l1 4 .3-6C7.500 1 9.500 1 9.800 2.500l.2 6 1-5c.5-1.500 2-1 2 .5l-.5 6 1.500-3c1-1 2 0 1.500 1L14 14l-1 4z" fill="#fff" stroke="#3a3f47"/></svg></button>
    <button class="plain fly" aria-label="オービット"><svg width="38" height="40" viewBox="0 0 19 20"><path d="M7 2v10l9 1M7 12l-5 6" fill="none" stroke="#222" stroke-width="1.300"/><path d="M7 4c5 0 7 4 7 9l-7-1z" fill="#7fb56c"/><circle cx="7.500" cy="11" r="6" fill="none" stroke="#3a3f47"/><path d="M5 3l2-3 2 3zM15 11l3 2-3 2zM1 15v5l4-1z" fill="#222"/></svg></button>
    <button class="plain" aria-label="最大化"><svg width="36" height="40" viewBox="0 0 18 20"><path d="M10 9h7v10h-8v-6" fill="#eceef2" stroke="#3a3f47" stroke-width="1.200"/><path d="M1 1h11v13H1z" fill="#f6f7f9" stroke="#3a3f47" stroke-width="1.300"/><path d="M9 11L4 5M4 9V5h3.500" fill="none" stroke="#222" stroke-width="1.400"/></svg></button>
  </div>
</footer>
</div>

<!-- red callout marks -->
<svg class="overlay" aria-hidden="true"><g fill="none" stroke="#e60012" stroke-width="7"><ellipse cx="424" cy="1179" rx="155" ry="29"/><path d="M548 1161L1818 738"/></g></svg>

<script>
// frame ticks 0..100, numbered every fifth frame
const track = document.getElementById('track');
for (let f = 0; f <= 100; f++) {
  const t = document.createElement('div');
  t.className = 'tick' + (f % 5 ? '' : ' major') + (f === 100 ? ' last' : '');
  if (f % 5 === 0) { const s = document.createElement('span'); s.textContent = f; t.append(s); }
  track.append(t);
}
</script>
</body>
</html>
